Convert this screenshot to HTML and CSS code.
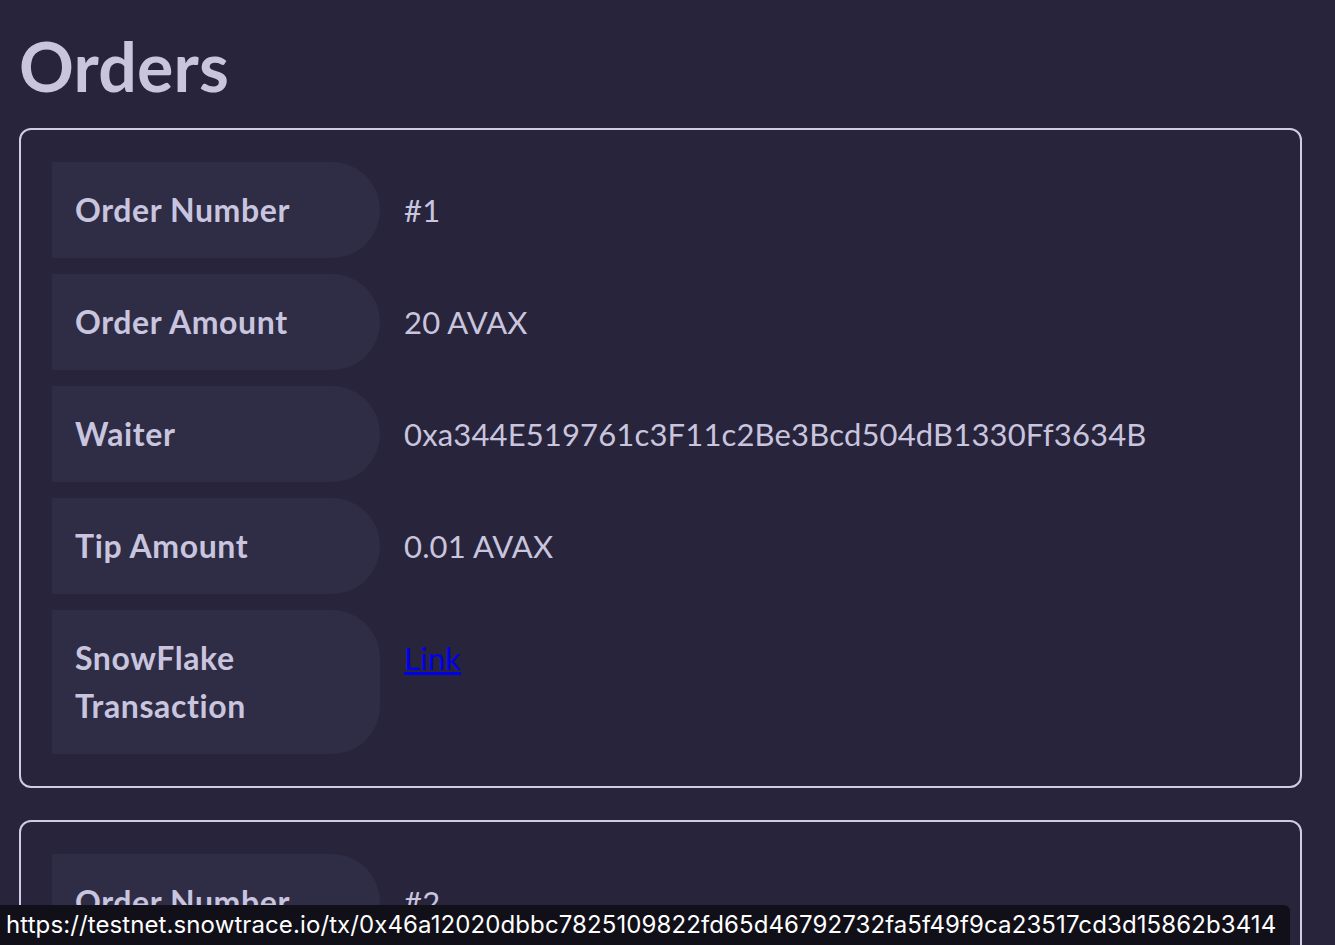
FILE: index.html
```html
<!DOCTYPE html>
<html lang="en">
<head>
<meta charset="utf-8">
<title>Orders</title>
<link rel="stylesheet" href="styles.css">
</head>
<body>
<main class="page">
  <h1 class="title">Orders</h1>
  <section class="order-card">
    <div class="row"><div class="label">Order Number</div><div class="value">#1</div></div>
    <div class="row"><div class="label">Order Amount</div><div class="value">20 AVAX</div></div>
    <div class="row"><div class="label">Waiter</div><div class="value">0xa344E519761c3F11c2Be3Bcd504dB1330Ff3634B</div></div>
    <div class="row"><div class="label">Tip Amount</div><div class="value">0.01 AVAX</div></div>
    <div class="row"><div class="label">SnowFlake Transaction</div><div class="value"><a class="link" href="#">Link</a></div></div>
  </section>
  <section class="order-card">
    <div class="row"><div class="label">Order Number</div><div class="value">#2</div></div>
    <div class="row"><div class="label">Order Amount</div><div class="value">20 AVAX</div></div>
  </section>
</main>
<div class="status-bar">https://testnet.snowtrace.io/tx/0x46a12020dbbc7825109822fd65d46792732fa5f49f9ca23517cd3d15862b3414</div>
</body>
</html>
```
FILE: styles.css
```css
html, body {
  margin: 0;
  padding: 0;
  background: #28243b;
  overflow: hidden;
  height: 100%;
}
.page {
  padding: 0 33px 0 19px;
  font-family: Lato, "Noto Sans", sans-serif;
  color: #c9c5df;
}
.title {
  margin: 0;
  padding: 30px 0 26px 0;
  font-size: 68px;
  line-height: 72px;
  font-weight: 700;
  letter-spacing: 0.2px;
  color: #c9c5df;
}
.order-card {
  border: 2px solid #d0cce6;
  border-radius: 12px;
  padding: 32px 32px 32px 31px;
  display: flex;
  flex-direction: column;
  gap: 16px;
  margin-bottom: 32px;
}
.row {
  display: flex;
  align-items: flex-start;
  gap: 24px;
}
.label {
  width: 328px;
  box-sizing: border-box;
  flex: none;
  background: #2f2c45;
  border-radius: 0 48px 48px 0;
  padding: 24px 24px 24px 23px;
  font-size: 32px;
  line-height: 48px;
  font-weight: 700;
  letter-spacing: 0.6px;
  color: #c9c5df;
}
.value {
  padding: 24px 0;
  font-size: 31px;
  line-height: 48px;
  font-weight: 400;
  letter-spacing: 0.15px;
  color: #c9c5df;
}
.link {
  color: #0000ee;
}
.status-bar {
  position: fixed;
  left: 0;
  bottom: 0;
  width: 1290px;
  height: 40px;
  box-sizing: border-box;
  padding: 0 6px;
  background: #111019;
  border-top-right-radius: 6px;
  color: #ffffff;
  font-family: Inter, "Liberation Sans", sans-serif;
  font-size: 24px;
  line-height: 40px;
  letter-spacing: 0.1px;
  white-space: nowrap;
  overflow: hidden;
}
```
